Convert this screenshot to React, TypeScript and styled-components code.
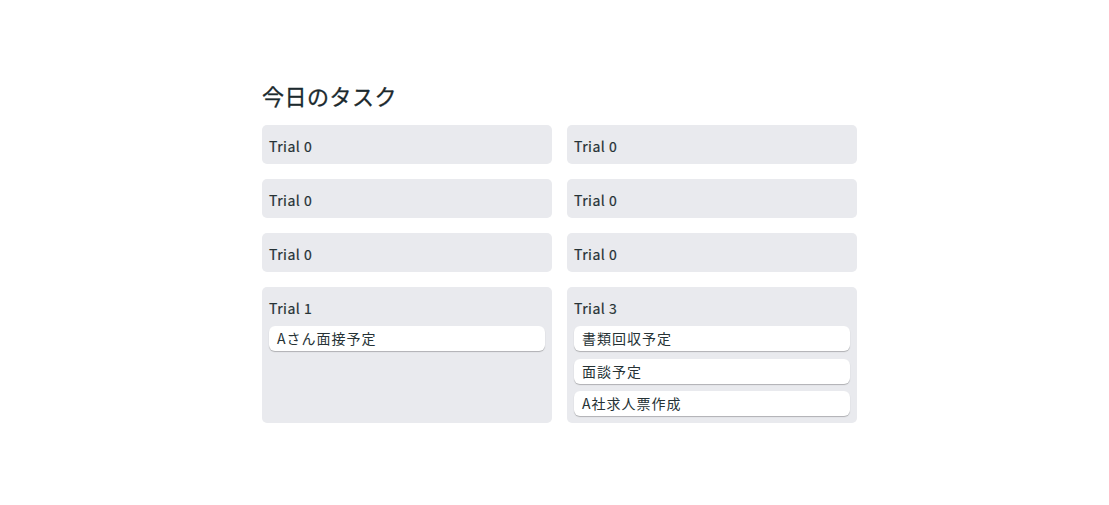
import styled, { createGlobalStyle } from 'styled-components';
import { FC } from 'react';

type Lane = {
  id: number;
  title: string;
  tasks: string[];
};

const lanes: Lane[] = [
  { id: 1, title: 'Trial 0', tasks: [] },
  { id: 2, title: 'Trial 0', tasks: [] },
  { id: 3, title: 'Trial 0', tasks: [] },
  { id: 4, title: 'Trial 0', tasks: [] },
  { id: 5, title: 'Trial 0', tasks: [] },
  { id: 6, title: 'Trial 0', tasks: [] },
  { id: 7, title: 'Trial 1', tasks: ['Aさん面接予定'] },
  { id: 8, title: 'Trial 3', tasks: ['書類回収予定', '面談予定', 'A社求人票作成'] },
];

const GlobalStyle = createGlobalStyle`
  body {
    margin: 0;
    background: #fff;
    font-family: 'Noto Sans CJK JP', 'Noto Sans', sans-serif;
    color: #1f2d30;
  }
`;

const SC = {
  Page: styled.main`
    padding: 79px 0 0 262px;
  `,
  Heading: styled.h1`
    margin: 0 0 14px;
    font-size: 22px;
    line-height: 32px;
    font-weight: 400;
    letter-spacing: 0.5px;
    color: #1c2a2e;
    -webkit-text-stroke: 0.3px #1c2a2e;
  `,
  Grid: styled.div`
    display: grid;
    grid-template-columns: 290px 290px;
    column-gap: 15px;
    row-gap: 15px;
  `,
  Lane: styled.section`
    display: flex;
    flex-direction: column;
    row-gap: 6.5px;
    background: #e9eaee;
    border-radius: 5px;
    padding: 8.5px 7px 6.5px;
  `,
  LaneTitle: styled.h2`
    margin: 0;
    font-size: 14px;
    line-height: 24px;
    font-weight: 400;
    color: #263235;
    letter-spacing: 0.5px;
    -webkit-text-stroke: 0.2px #263235;
  `,
  Task: styled.div`
    background: #fff;
    border-radius: 6px;
    box-shadow: 0 1px 1px rgba(0, 0, 0, 0.25);
    height: 25px;
    padding: 0 8px;
    font-size: 14px;
    line-height: 24px;
    letter-spacing: 1px;
    color: #263235;

    & + & {
      margin-top: 1px;
    }
  `,
};

const App: FC = () => {
  return (
    <>
      <GlobalStyle />
      <SC.Page>
        <SC.Heading>今日のタスク</SC.Heading>
        <SC.Grid>
          {lanes.map((lane) => (
            <SC.Lane key={lane.id}>
              <SC.LaneTitle>{lane.title}</SC.LaneTitle>
              {lane.tasks.map((task) => (
                <SC.Task key={task}>{task}</SC.Task>
              ))}
            </SC.Lane>
          ))}
        </SC.Grid>
      </SC.Page>
    </>
  );
};

export default App;
